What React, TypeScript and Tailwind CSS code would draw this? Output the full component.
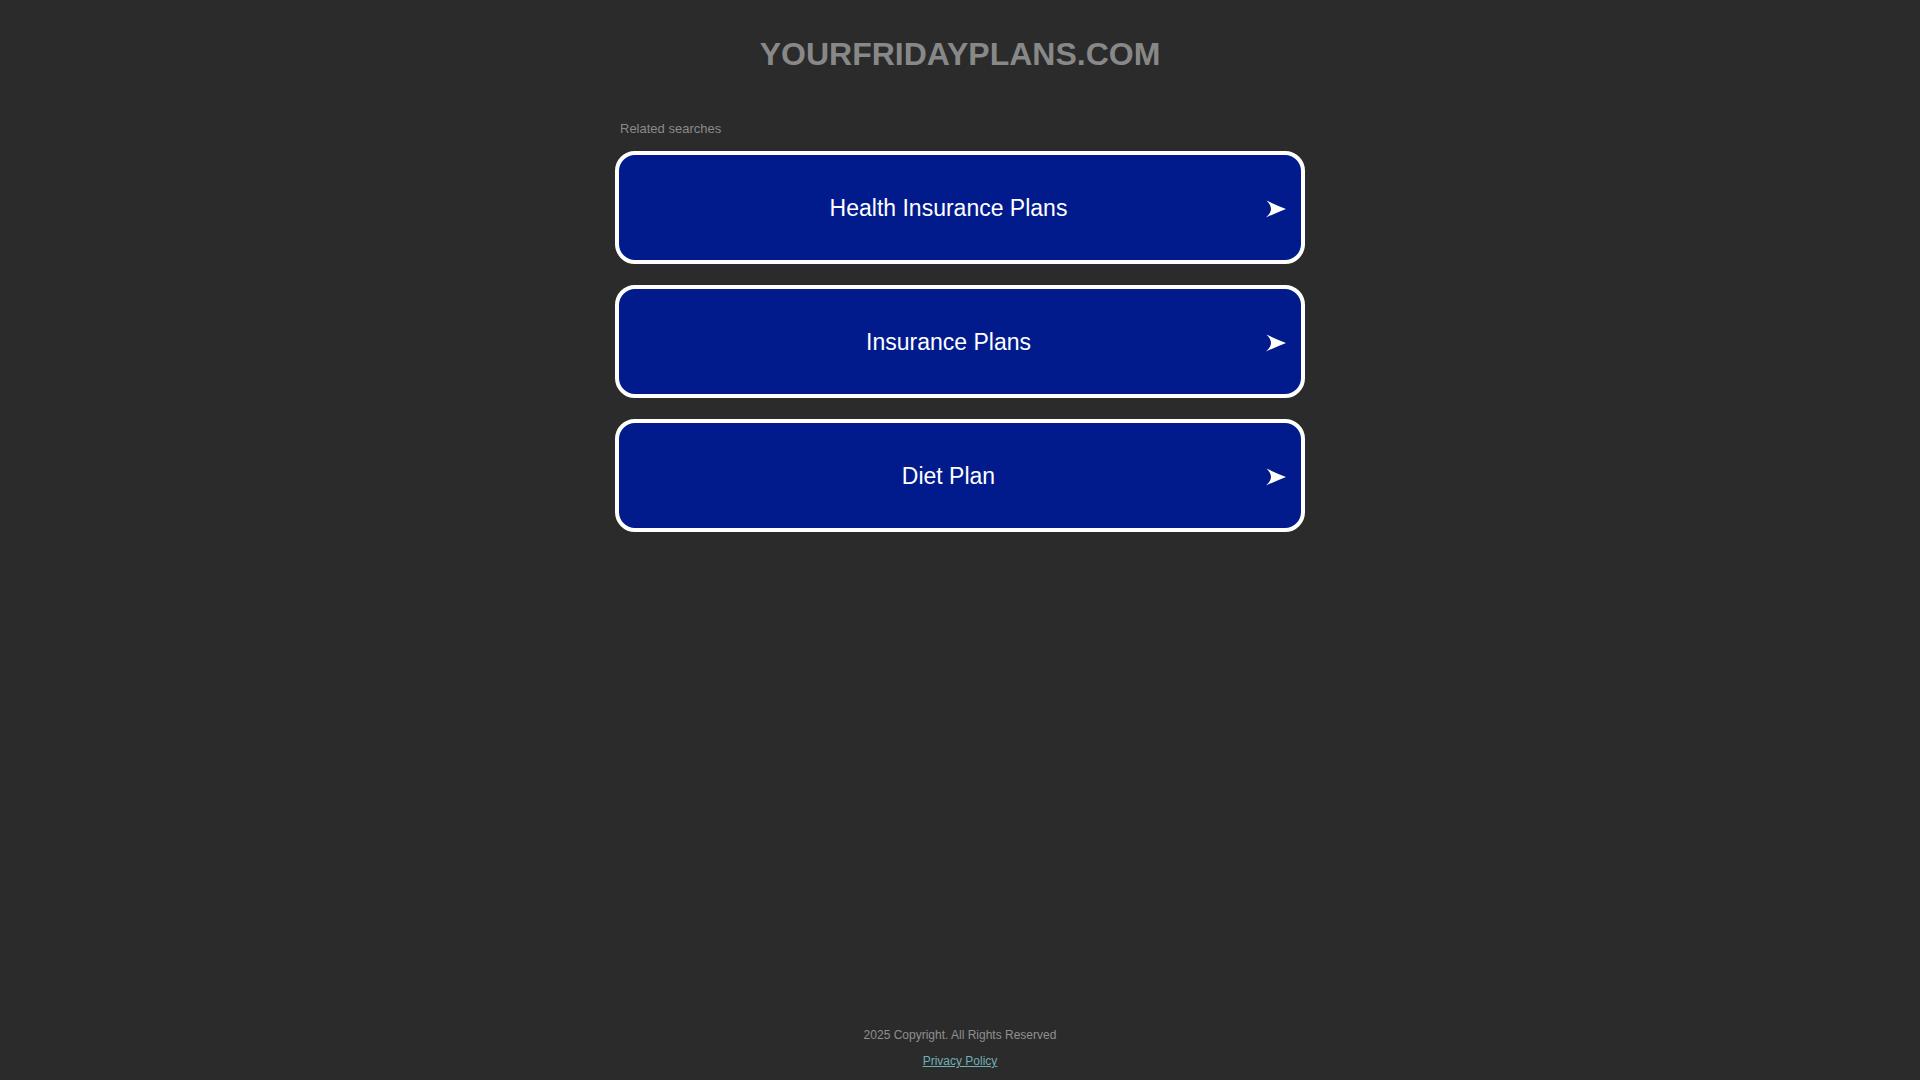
import React from 'react';

const SEARCHES = ['Health Insurance Plans', 'Insurance Plans', 'Diet Plan'];

const Arrow: React.FC = () => (
  <svg width="20" height="18" viewBox="0 0 20 18" className="shrink-0">
    <path d="M0.5 0.5 Q10 5 20 9 Q10 13 0 17.5 Q5 13 5 9 Q5 5 0.5 0.5 Z" fill="#ffffff" />
  </svg>
);

export default function App() {
  return (
    <div
      className="min-h-screen flex flex-col bg-[#2b2b2b]"
      style={{ fontFamily: '"Liberation Sans", Arial, sans-serif' }}
    >
      <div className="flex-1 flex flex-col items-center">
        {/* Domain title */}
        <h1 className="pt-[36px] text-[32px] leading-[36px] font-bold text-[#888888]">
          YOURFRIDAYPLANS.COM
        </h1>

        <div className="w-[690px] mt-[49px]">
          <p className="pl-[5px] text-[13px] leading-[15px] text-[#8a8a8a]">Related searches</p>

          <div className="mt-[15px] flex flex-col gap-[21px]">
            {SEARCHES.map((s) => (
              <a
                key={s}
                href="#"
                className="h-[113px] flex items-center rounded-[20px] border-4 border-white bg-[#021b8c] pl-[12px] pr-[15px] pt-[2px]"
              >
                <span className="flex-1 text-center text-[23px] text-white">{s}</span>
                <Arrow />
              </a>
            ))}
          </div>
        </div>
      </div>

      {/* Footer */}
      <footer className="flex flex-col items-center pb-[12px] text-[12px] leading-[14px]">
        <span className="text-[#8f8f8f]">2025 Copyright. All Rights Reserved</span>
        <a href="#" className="mt-[12px] text-[#70b0b4] underline">
          Privacy Policy
        </a>
      </footer>
    </div>
  );
}
